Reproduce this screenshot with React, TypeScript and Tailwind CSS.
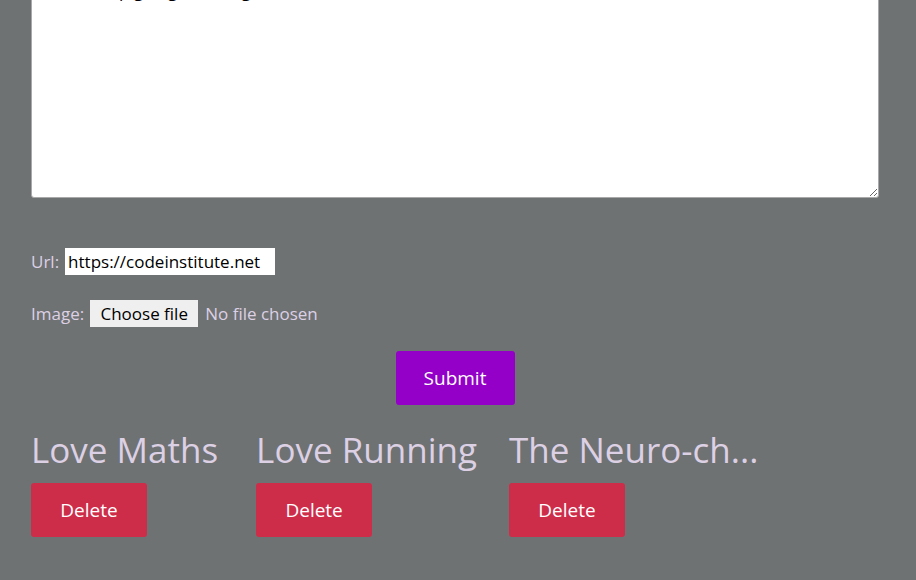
import { useState } from 'react';

const POSTS = [
  { id: 1, title: 'Love Maths' },
  { id: 2, title: 'Love Running' },
  { id: 3, title: 'The Neuro-chemistry of Learning' },
];

function short(t: string) {
  return t.length > 13 ? t.slice(0, 12) + '...' : t;
}

export default function App() {
  const [url, setUrl] = useState('https://codeinstitute.net');
  const [body, setBody] = useState(
    'The things we love are the things we learn best.\nRunning every morning, thinking all evening, learning every day.\nSo we keep going, learning.'
  );

  return (
    <div className="min-h-screen bg-[#6f7273] font-['Open_Sans',sans-serif] text-[#dcd0e4] overflow-hidden">
      <form className="pl-[31px] pr-[37px] -mt-[80px]" onSubmit={(e) => e.preventDefault()}>
        <textarea
          value={body}
          onChange={(e) => setBody(e.target.value)}
          className="block w-full h-[278px] bg-white text-black rounded-[3px] border border-[#a9a9a9] px-2 pt-[5px] text-[17px] leading-[26px] font-['Open_Sans',sans-serif]"
        />

        <div className="mt-[50px] flex items-center gap-[6px] text-[17px]">
          <label htmlFor="url">Url:</label>
          <input
            id="url"
            value={url}
            onChange={(e) => setUrl(e.target.value)}
            className="w-[210px] h-[27px] bg-white text-black px-[3px] text-[17px] outline-none"
          />
        </div>

        <div className="mt-[25px] flex items-center gap-[6px] text-[17px]">
          <label>Image:</label>
          <button type="button" className="h-[27px] w-[108px] bg-[#efefef] text-black text-[17px]">
            Choose file
          </button>
          <span className="ml-[1px]">No file chosen</span>
        </div>

        <div className="mt-[24px] flex justify-center">
          <button type="submit" className="w-[119px] h-[54px] rounded-[3px] bg-[#9400c8] text-white text-[19px]">
            Submit
          </button>
        </div>
      </form>

      <div className="px-[31px] mt-[23px] flex">
        {POSTS.map((p, i) => (
          <div
            key={p.id}
            className={`flex flex-col items-start ${i === 0 ? 'mr-[38px]' : 'mr-[32px]'}`}
          >
            <h2 className="text-[35px] leading-[44px] whitespace-nowrap">{short(p.title)}</h2>
            <button className="mt-[11px] w-[116px] h-[54px] rounded-[3px] bg-[#ce2d4a] text-white text-[19px]">
              Delete
            </button>
          </div>
        ))}
      </div>
    </div>
  );
}
